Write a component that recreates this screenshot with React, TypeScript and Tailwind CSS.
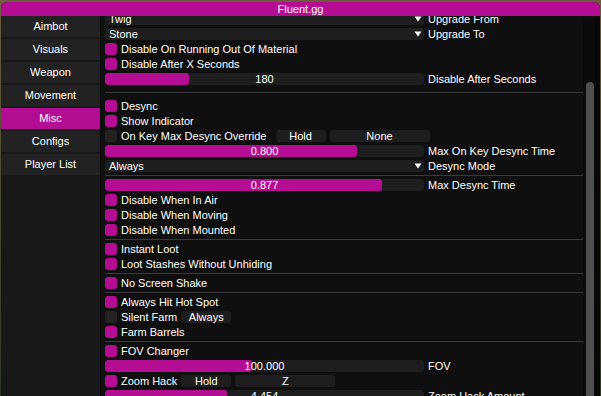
import React from "react";

const MAG = "bg-[#b40c92]";

function Check({ on, label, children, wide }: { on?: boolean; label: string; children?: React.ReactNode; wide?: boolean }) {
  return (
    <div className="flex items-center h-[12px] gap-[4px] shrink-0">
      <div className={`w-[12px] h-[12px] rounded-[3px] ${on ? MAG : "bg-[#222222]"}`} />
      <span className={`leading-[12px] whitespace-nowrap ${wide ? "mr-[5px]" : ""}`}>{label}</span>
      {children}
    </div>
  );
}

function Btn({ w, label }: { w: "s" | "l"; label: string }) {
  return (
    <div
      className={`${w === "s" ? "w-[50px]" : "w-[100px]"} h-[12px] rounded-[3px] bg-[#1e1e1e] text-center leading-[12px]`}
    >
      {label}
    </div>
  );
}

function Slider({ fill, value, label }: { fill: number; value: string; label: string }) {
  return (
    <div className="flex items-center h-[12px] gap-[4px] shrink-0">
      <div className="grid w-[319px] h-[12px] rounded-[3px] bg-[#1e1e1e] overflow-hidden">
        <div className={`[grid-area:1/1] h-[12px] rounded-[3px] ${MAG}`} style={{ width: fill }} />
        <span className="[grid-area:1/1] text-center leading-[12px]">{value}</span>
      </div>
      <span className="leading-[12px] whitespace-nowrap">{label}</span>
    </div>
  );
}

function Combo({ value, label }: { value: string; label: string }) {
  return (
    <div className="flex items-center h-[12px] gap-[4px] shrink-0">
      <div className="flex items-center justify-between w-[319px] h-[12px] rounded-[3px] bg-[#1e1e1e] pl-[4px] pr-[2px]">
        <span className="leading-[12px]">{value}</span>
        <svg width="8" height="6" viewBox="0 0 8 6">
          <polygon points="0.5,0.5 7.5,0.5 4,5.5" fill="#ffffff" />
        </svg>
      </div>
      <span className="leading-[12px] whitespace-nowrap">{label}</span>
    </div>
  );
}

function Sep({ big }: { big?: boolean }) {
  return <div className={`h-[1px] bg-[#3a3a3a] shrink-0 ${big ? "my-[4px]" : ""}`} />;
}

const tabs = ["Aimbot", "Visuals", "Weapon", "Movement", "Misc", "Configs", "Player List"];

export default function App() {
  return (
    <div
      className="w-[601px] h-[396px] overflow-hidden bg-gradient-to-b from-[#6e5b3e] via-[#4a4a2e] to-[#2f3a22] pt-[2px] pl-[1px] text-white text-[11px]"
      style={{ fontFamily: '"Liberation Sans", Arial, sans-serif' }}
    >
      <div className="w-[599px] h-[394px] flex flex-col rounded-t-[6px] overflow-hidden bg-[#0f0f0f]">
        <div className={`h-[14px] ${MAG} text-center leading-[14px] shrink-0`}>Fluent.gg</div>
        <div className="flex flex-1 min-h-0">
          {/* sidebar */}
          <div className="w-[100px] bg-[#181818] flex flex-col gap-[2px] border-r border-[#0c0c0c]">
            {tabs.map((t) => (
              <div
                key={t}
                className={`h-[21px] leading-[21px] text-center ${t === "Misc" ? MAG : "bg-[#222222]"}`}
              >
                {t}
              </div>
            ))}
          </div>
          {/* content */}
          <div className="flex-1 min-w-0 overflow-hidden pl-[4px]">
            <div className="flex flex-col gap-[3px] -mt-[3px]">
              <Combo value="Twig" label="Upgrade From" />
              <Combo value="Stone" label="Upgrade To" />
              <Check on label="Disable On Running Out Of Material" />
              <Check on label="Disable After X Seconds" />
              <Slider fill={84} value="180" label="Disable After Seconds" />
              <Sep big />
              <Check on label="Desync" />
              <Check on label="Show Indicator" />
              <Check label="On Key Max Desync Override" wide>
                <Btn w="s" label="Hold" />
                <Btn w="l" label="None" />
              </Check>
              <Slider fill={252} value="0.800" label="Max On Key Desync Time" />
              <Combo value="Always" label="Desync Mode" />
              <Sep />
              <Slider fill={277} value="0.877" label="Max Desync Time" />
              <Check on label="Disable When In Air" />
              <Check on label="Disable When Moving" />
              <Check on label="Disable When Mounted" />
              <Sep />
              <Check on label="Instant Loot" />
              <Check on label="Loot Stashes Without Unhiding" />
              <Sep />
              <Check on label="No Screen Shake" />
              <Sep />
              <Check on label="Always Hit Hot Spot" />
              <Check label="Silent Farm">
                <Btn w="s" label="Always" />
              </Check>
              <Check on label="Farm Barrels" />
              <Sep />
              <Check on label="FOV Changer" />
              <Slider fill={147} value="100.000" label="FOV" />
              <Check on label="Zoom Hack">
                <Btn w="s" label="Hold" />
                <Btn w="l" label="Z" />
              </Check>
              <Slider fill={122} value="4.454" label="Zoom Hack Amount" />
            </div>
          </div>
          {/* scrollbar */}
          <div className="w-[12px] bg-[#0b0b0b] pt-[64px] pl-[3px] mt-[2px]">
            <div className="w-[8px] h-full rounded-t-[4px] bg-[#4e4e4e]" />
          </div>
          <div className="w-[5px] bg-[#070707]" />
        </div>
      </div>
    </div>
  );
}
